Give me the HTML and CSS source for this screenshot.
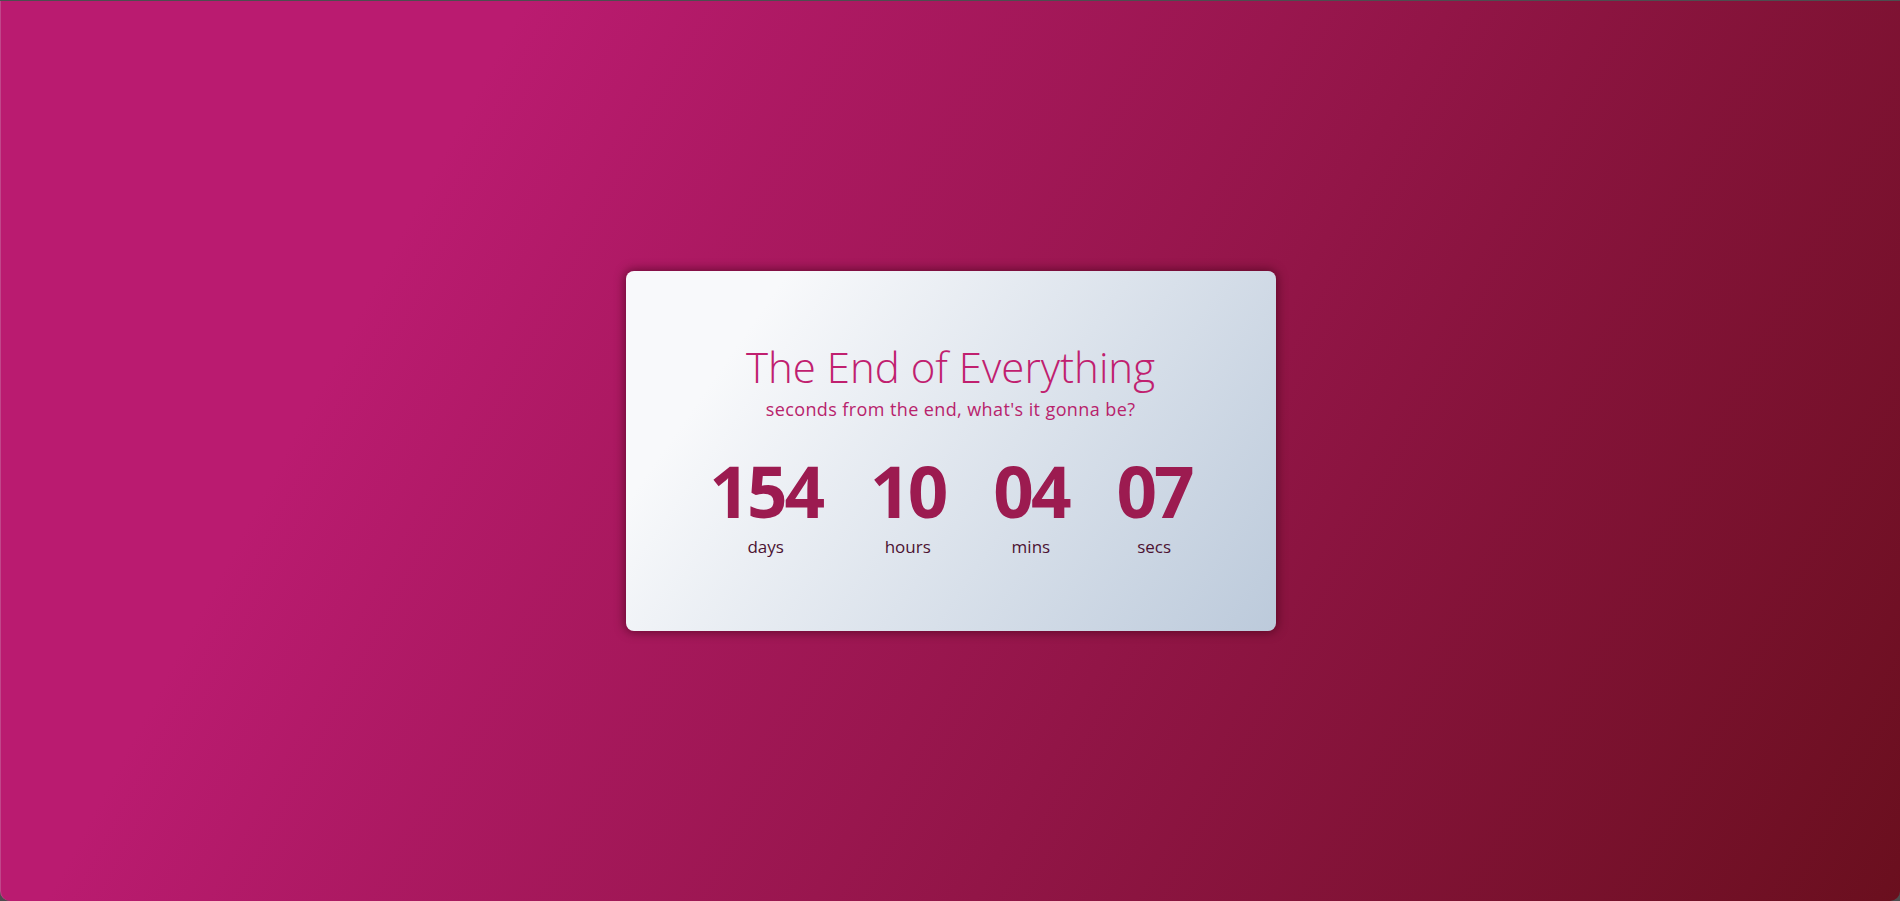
FILE: index.html
```html
<!DOCTYPE html>
<html lang="en">
<head>
<meta charset="utf-8">
<title>The End of Everything</title>
<link rel="stylesheet" href="styles.css">
</head>
<body>
<main class="screen">
  <section class="card">
    <h1 class="title">The End of Everything</h1>
    <p class="subtitle">seconds from the end, what's it gonna be?</p>
    <div class="countdown">
      <div class="unit"><span class="num">154</span><span class="label">days</span></div>
      <div class="unit"><span class="num">10</span><span class="label">hours</span></div>
      <div class="unit"><span class="num">04</span><span class="label">mins</span></div>
      <div class="unit"><span class="num">07</span><span class="label">secs</span></div>
    </div>
  </section>
</main>
</body>
</html>
```
FILE: styles.css
```css
html, body {
  margin: 0;
  padding: 0;
  height: 100%;
}
body {
  background: #4d4d4f;
  font-family: "Open Sans", "Liberation Sans", sans-serif;
}
.screen {
  box-sizing: border-box;
  margin-top: 1px;
  height: 900px;
  border-radius: 0 0 10px 10px;
  background: linear-gradient(118deg, #ba1b70 22%, #6a0f1e 100%);
  display: flex;
  align-items: center;
  justify-content: center;
  border-left: 1px solid #c0468a;
}
.card {
  width: 650px;
  height: 360px;
  box-sizing: border-box;
  border-radius: 8px;
  background: linear-gradient(125deg, #f8f9fb 18%, #bccadb 100%);
  box-shadow: 0 0 10px 2px rgba(60, 0, 20, 0.55);
  display: flex;
  flex-direction: column;
  align-items: center;
  justify-content: center;
  padding-bottom: 4px;
}
.title {
  margin: 0;
  font-weight: 300;
  font-size: 42px;
  line-height: 54px;
  color: #c0206f;
}
.subtitle {
  margin: 2px 0 0;
  font-size: 18px;
  line-height: 26px;
  letter-spacing: 0.4px;
  color: #b8236c;
  font-weight: 400;
}
.countdown {
  display: flex;
  gap: 48px;
  margin-top: 29px;
}
.unit {
  display: flex;
  flex-direction: column;
  align-items: center;
}
.num {
  font-size: 71px;
  line-height: 80px;
  font-weight: 700;
  letter-spacing: -3px;
  color: #9c1b50;
}
.label {
  margin-top: 4px;
  font-size: 17px;
  line-height: 24px;
  color: #4c1232;
}
```
